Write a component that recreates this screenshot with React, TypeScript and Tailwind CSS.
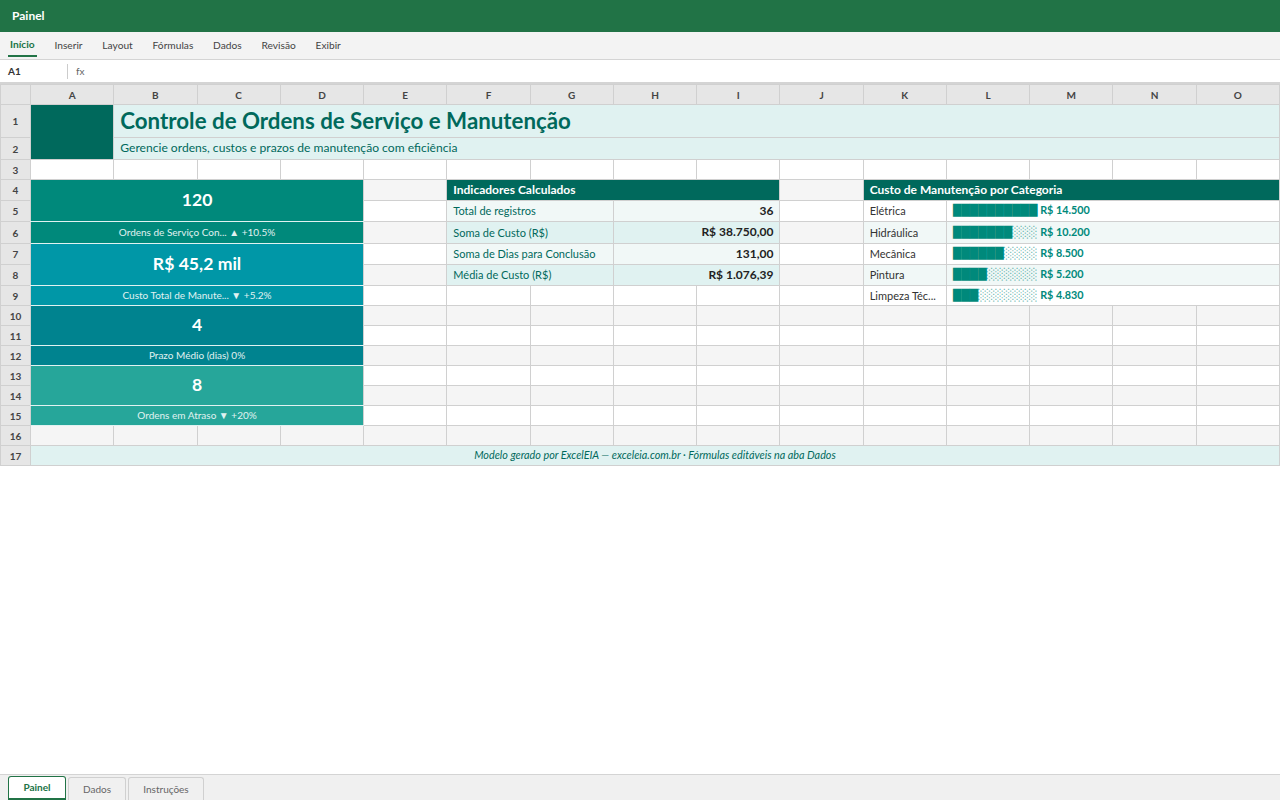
import React from 'react';

const cols = ['A', 'B', 'C', 'D', 'E', 'F', 'G', 'H', 'I', 'J', 'K', 'L', 'M', 'N', 'O'];
const menu = ['Início', 'Inserir', 'Layout', 'Fórmulas', 'Dados', 'Revisão', 'Exibir'];

const cellBase = 'border border-[#d0d0d0] p-0 leading-none';
const cellText = 'border border-[#d0d0d0] pt-0 pb-[1px] leading-none';

const RowHead = ({ n }: { n: number }) => (
  <td className={`${cellBase} bg-[#e6e6e6] text-center text-[10px] font-bold text-[#444]`}>{n}</td>
);

// empty cells, striped by row
const Blank = ({ row, span = 1 }: { row: number; span?: number }) => (
  <td colSpan={span} className={`${cellBase} ${row % 2 === 0 ? 'bg-[#f5f5f5]' : 'bg-white'}`} />
);

const Blanks = ({ row, from, to }: { row: number; from: number; to: number }) => (
  <>
    {cols.slice(from, to).map(c => (
      <Blank key={c} row={row} />
    ))}
  </>
);

const KpiValue = ({ value, color }: { value: string; color: string }) => (
  <td colSpan={4} rowSpan={2} className={`${cellText} border-b-[#e0f2f1] text-center text-[17.6px] font-bold text-white ${color}`}>
    {value}
  </td>
);

const KpiLabel = ({ label, color }: { label: string; color: string }) => (
  <td colSpan={4} className={`${cellText} border-b-[#e0f2f1] text-center text-[10px] text-[#e0f2f1] ${color}`}>
    {label}
  </td>
);

const IndLabel = ({ text, dark }: { text: string; dark?: boolean }) => (
  <td colSpan={2} className={`${cellText} px-[6px] text-[11px] whitespace-nowrap text-[#00695c] ${dark ? 'bg-[#e0f2f1]' : 'bg-[#f1f8f7]'}`}>{text}</td>
);

const IndValue = ({ text, dark }: { text: string; dark?: boolean }) => (
  <td colSpan={2} className={`${cellText} px-[6px] text-right text-[12px] font-bold text-[#222] ${dark ? 'bg-[#e0f2f1]' : 'bg-[#f1f8f7]'}`}>{text}</td>
);

const CatName = ({ text, alt }: { text: string; alt?: boolean }) => (
  <td className={`${cellText} px-[6px] text-[11px] whitespace-nowrap text-[#333] ${alt ? 'bg-[#f1f8f7]' : 'bg-white'}`}>{text}</td>
);

const CatBar = ({ filled, value, alt }: { filled: number; value: string; alt?: boolean }) => (
  <td colSpan={4} className={`${cellText} px-[6px] text-[10.8px] font-bold whitespace-nowrap text-[#00897b] ${alt ? 'bg-[#f1f8f7]' : 'bg-white'}`}>
    <span className="font-['DejaVu_Sans',sans-serif] text-[11px] font-normal [text-rendering:geometricPrecision]">
      {'█'.repeat(filled)}
      <span className="opacity-60">{'░'.repeat(10 - filled)}</span>
    </span>{' '}
    {value}
  </td>
);

export default function App() {
  return (
    <div className="flex h-[800px] w-[1280px] flex-col overflow-hidden bg-white font-['Lato',sans-serif]">
      <div className="flex h-8 shrink-0 items-center bg-[#217346] px-3 text-[12px] font-bold text-white">Painel</div>

      <div className="flex h-7 shrink-0 items-center gap-[19.8px] border-b border-[#d4d4d4] bg-[#f3f3f3] px-2 text-[10.2px] text-[#444]">
        {menu.map((m, i) =>
          i === 0 ? (
            <span key={m} className="-mr-[2px] border-b-2 border-[#217346] px-[2px] pt-[2.5px] pb-[3px] font-bold text-[#217346]">{m}</span>
          ) : (
            <span key={m}>{m}</span>
          )
        )}
      </div>

      <div className="flex h-6 shrink-0 items-center border-b-2 border-[#d4d4d4] bg-white px-2 text-[10px]">
        <span className="w-[59px] font-bold text-[#333]">A1</span>
        <span className="border-l border-[#ccc] pl-2 text-[#666]">fx</span>
      </div>

      <div className="flex-1">
        <table className="w-full table-fixed border-collapse">
          <colgroup>
            <col className="w-[30px]" />
            {cols.map(c => (
              <col key={c} />
            ))}
          </colgroup>
          <tbody>
            <tr className="h-[20px]">
              <td className={`${cellBase} bg-[#e6e6e6]`} />
              {cols.map(c => (
                <td key={c} className={`${cellBase} bg-[#e6e6e6] text-center text-[10px] font-bold text-[#444]`}>{c}</td>
              ))}
            </tr>
            <tr className="h-[33px]">
              <RowHead n={1} />
              <td rowSpan={2} className={`${cellBase} bg-[#00695c]`} />
              <td colSpan={14} className={`${cellBase} bg-[#e0f2f1] px-[6px] text-[22.3px] font-bold text-[#00695c]`}>Controle de Ordens de Serviço e Manutenção</td>
            </tr>
            <tr className="h-[22px]">
              <RowHead n={2} />
              <td colSpan={14} className={`${cellText} bg-[#e0f2f1] px-[6px] text-[12.1px] text-[#00695c]`}>Gerencie ordens, custos e prazos de manutenção com eficiência</td>
            </tr>
            <tr className="h-[20px]">
              <RowHead n={3} />
              <Blanks row={3} from={0} to={15} />
            </tr>
            <tr className="h-[21px]">
              <RowHead n={4} />
              <KpiValue value="120" color="bg-[#00897b]" />
              <Blank row={4} />
              <td colSpan={4} className={`${cellText} bg-[#00695c] px-[6px] text-[12px] font-bold text-white`}>Indicadores Calculados</td>
              <Blank row={4} />
              <td colSpan={5} className={`${cellText} bg-[#00695c] px-[6px] text-[12px] font-bold text-white`}>Custo de Manutenção por Categoria</td>
            </tr>
            <tr className="h-[21px]">
              <RowHead n={5} />
              <Blank row={5} />
              <IndLabel text="Total de registros" />
              <IndValue text="36" />
              <Blank row={5} />
              <CatName text="Elétrica" />
              <CatBar filled={10} value="R$ 14.500" />
            </tr>
            <tr className="h-[22px]">
              <RowHead n={6} />
              <KpiLabel label="Ordens de Serviço Con... ▲ +10.5%" color="bg-[#00897b]" />
              <Blank row={6} />
              <IndLabel text="Soma de Custo (R$)" dark />
              <IndValue text="R$ 38.750,00" dark />
              <Blank row={6} />
              <CatName text="Hidráulica" alt />
              <CatBar filled={7} value="R$ 10.200" alt />
            </tr>
            <tr className="h-[21px]">
              <RowHead n={7} />
              <KpiValue value="R$ 45,2 mil" color="bg-[#0097a7]" />
              <Blank row={7} />
              <IndLabel text="Soma de Dias para Conclusão" />
              <IndValue text="131,00" />
              <Blank row={7} />
              <CatName text="Mecânica" />
              <CatBar filled={6} value="R$ 8.500" />
            </tr>
            <tr className="h-[21px]">
              <RowHead n={8} />
              <Blank row={8} />
              <IndLabel text="Média de Custo (R$)" dark />
              <IndValue text="R$ 1.076,39" dark />
              <Blank row={8} />
              <CatName text="Pintura" alt />
              <CatBar filled={4} value="R$ 5.200" alt />
            </tr>
            <tr className="h-[20px]">
              <RowHead n={9} />
              <KpiLabel label="Custo Total de Manute... ▼ +5.2%" color="bg-[#0097a7]" />
              <Blanks row={9} from={4} to={10} />
              <CatName text="Limpeza Téc..." />
              <CatBar filled={3} value="R$ 4.830" />
            </tr>
            <tr className="h-[20px]">
              <RowHead n={10} />
              <KpiValue value="4" color="bg-[#00838f]" />
              <Blanks row={10} from={4} to={15} />
            </tr>
            <tr className="h-[20px]">
              <RowHead n={11} />
              <Blanks row={11} from={4} to={15} />
            </tr>
            <tr className="h-[20px]">
              <RowHead n={12} />
              <KpiLabel label="Prazo Médio (dias) 0%" color="bg-[#00838f]" />
              <Blanks row={12} from={4} to={15} />
            </tr>
            <tr className="h-[20px]">
              <RowHead n={13} />
              <KpiValue value="8" color="bg-[#26a69a]" />
              <Blanks row={13} from={4} to={15} />
            </tr>
            <tr className="h-[20px]">
              <RowHead n={14} />
              <Blanks row={14} from={4} to={15} />
            </tr>
            <tr className="h-[20px]">
              <RowHead n={15} />
              <KpiLabel label="Ordens em Atraso ▼ +20%" color="bg-[#26a69a]" />
              <Blanks row={15} from={4} to={15} />
            </tr>
            <tr className="h-[20px]">
              <RowHead n={16} />
              <Blanks row={16} from={0} to={15} />
            </tr>
            <tr className="h-[20px]">
              <RowHead n={17} />
              <td colSpan={15} className={`${cellBase} bg-[#e0f2f1] text-center text-[10.8px] text-[#00695c] italic`}>Modelo gerado por ExcelEIA — exceleia.com.br · Fórmulas editáveis na aba Dados</td>
            </tr>
          </tbody>
        </table>
      </div>

      <div className="flex h-[26px] shrink-0 items-end gap-[2px] border-t border-[#d4d4d4] bg-[#f0f0f0] px-2 text-[10px]">
        <span className="flex h-[24px] w-[58px] items-center justify-center rounded-t-[3px] border border-b-2 border-[#217346] bg-white font-bold text-[#217346]">Painel</span>
        <span className="flex h-[23px] w-[58px] items-center justify-center rounded-t-[3px] border border-b-0 border-[#d0d0d0] bg-[#f0f0f0] text-[#666]">Dados</span>
        <span className="flex h-[23px] w-[76px] items-center justify-center rounded-t-[3px] border border-b-0 border-[#d0d0d0] bg-[#f0f0f0] text-[#666]">Instruções</span>
      </div>
    </div>
  );
}
